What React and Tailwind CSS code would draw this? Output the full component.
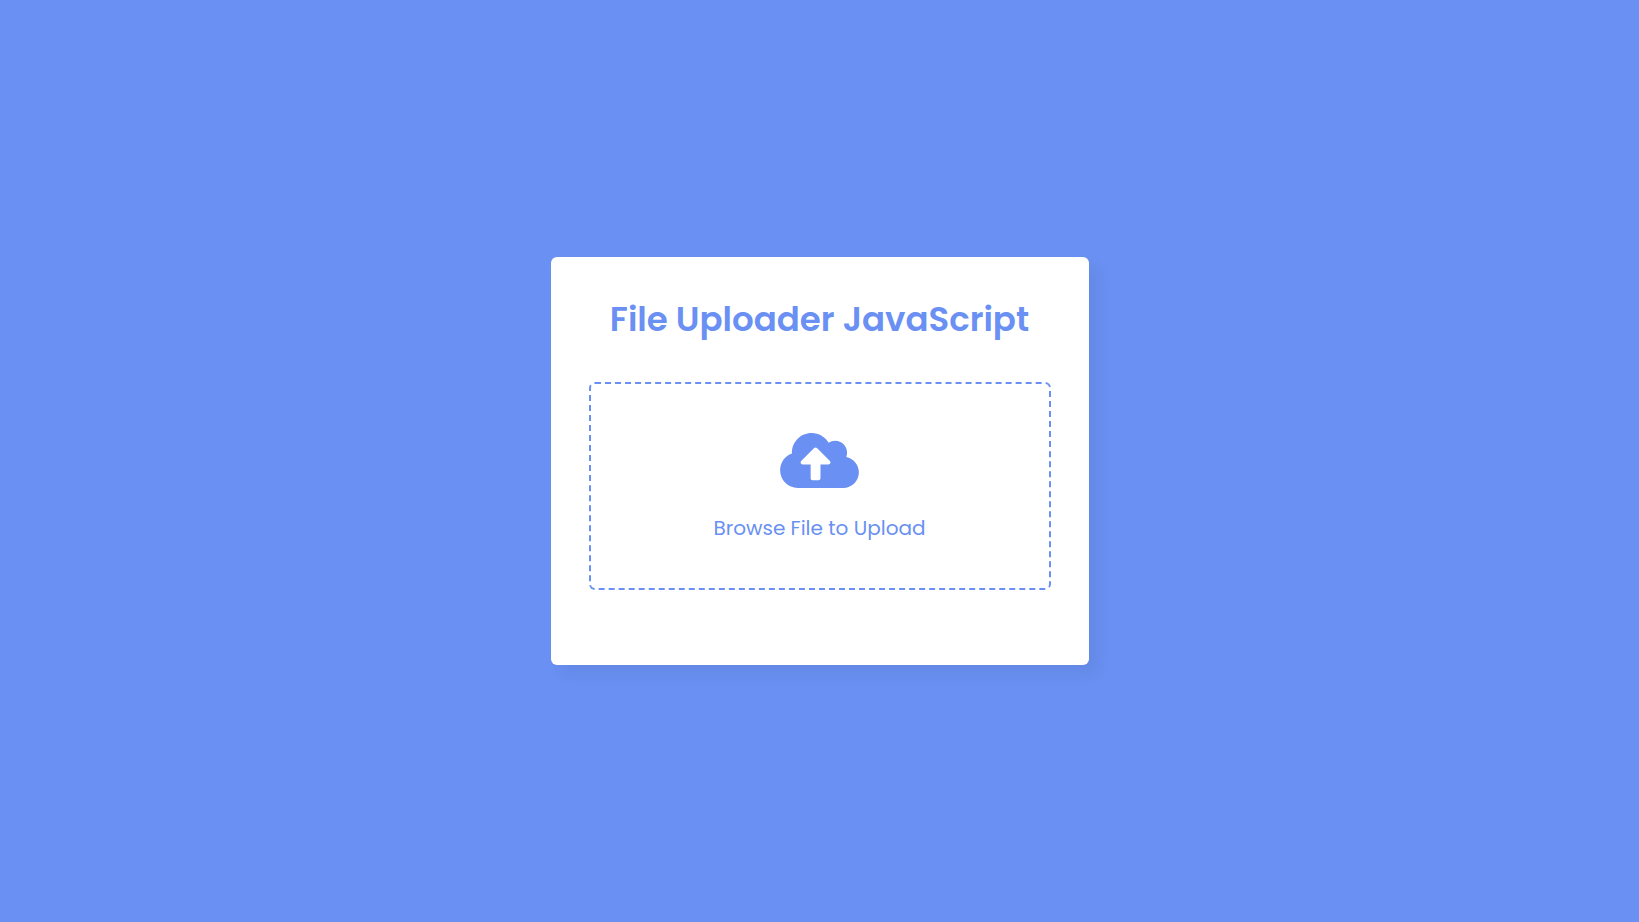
import { FaCloudUploadAlt } from "react-icons/fa";

export default function App() {
  return (
    <main className="flex min-h-screen items-center justify-center bg-[#6990f2] font-['Poppins','Inter',sans-serif] text-[#6990f2]">
      <section className="w-full max-w-[538px] rounded-md bg-white px-[38px] pt-[38px] pb-[75px] shadow-[9px_9px_15px_rgba(0,0,0,0.05)]">
        <h1 className="text-center text-[34px] leading-[48px] font-semibold">
          File Uploader JavaScript
        </h1>
        <form className="mt-[39px]">
          <label className="flex h-[208px] cursor-pointer flex-col items-center justify-center rounded-md border-2 border-dashed border-[#6990f2]">
            <input type="file" className="sr-only" />
            <FaCloudUploadAlt className="h-[63px] w-[79px]" aria-hidden="true" />
            <span className="mt-5 text-[20px] leading-8">Browse File to Upload</span>
          </label>
        </form>
      </section>
    </main>
  );
}
